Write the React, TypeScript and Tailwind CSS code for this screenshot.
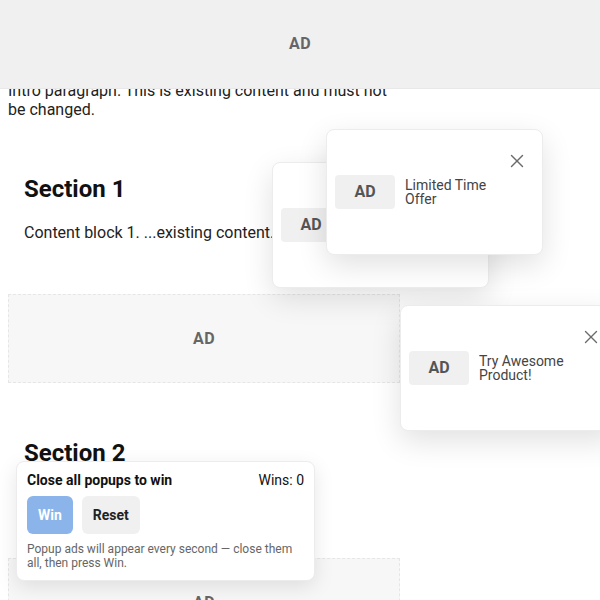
import { useState } from 'react';

type Popup = { id: number; left: number; top: number; text: string };

const initialPopups: Popup[] = [
  { id: 1, left: 272, top: 162, text: 'Special Deal Today' },
  { id: 2, left: 326, top: 129, text: 'Limited Time Offer' },
  { id: 3, left: 400, top: 305, text: 'Try Awesome Product!' },
];

function CloseIcon() {
  return (
    <svg width="14" height="14" viewBox="0 0 14 14" fill="none" stroke="#6b6b6b" strokeWidth="1.4" strokeLinecap="round">
      <line x1="1.5" y1="1.5" x2="12.5" y2="12.5" />
      <line x1="12.5" y1="1.5" x2="1.5" y2="12.5" />
    </svg>
  );
}

function AdBlock() {
  return (
    <div className="mt-9 flex h-[89px] items-center justify-center border border-dashed border-[#e6e6e6] bg-[#f7f7f7]">
      <span className="text-[16px] font-bold tracking-wide text-[#666]">AD</span>
    </div>
  );
}

function Section({ title, body }: { title: string; body: string }) {
  return (
    <section className="mt-10 px-4 pt-4 pb-4">
      <h2 className="text-[24px] leading-[28px] font-bold text-[#111]">{title}</h2>
      <p className="mt-5 text-[16px] leading-[19px] text-[#222]">{body}</p>
    </section>
  );
}

export default function App() {
  const [popups, setPopups] = useState(initialPopups);
  const [wins, setWins] = useState(0);

  return (
    <div className="relative h-[600px] w-[600px] overflow-hidden bg-white font-['Roboto',sans-serif]">
      <div className="ml-2 w-[392px] pt-[81px]">
        <p className="text-[16px] leading-[19px] text-[#222]">
          Intro paragraph. This is existing content and must not be changed.
        </p>
        <Section title="Section 1" body="Content block 1. ...existing content..." />
        <AdBlock />
        <Section title="Section 2" body="Content block 2. ...existing content..." />
        <AdBlock />
      </div>

      <div className="absolute top-0 left-0 flex h-[89px] w-full items-center justify-center border-b border-[#e8e8e8] bg-[#f0f0f0]">
        <span className="text-[16px] font-bold tracking-wide text-[#666]">AD</span>
      </div>

      {popups.map((p) => (
        <div
          key={p.id}
          className="absolute flex h-[126px] w-[217px] items-center rounded-lg border border-[#ececec] bg-white p-2 shadow-[0_10px_30px_rgba(0,0,0,0.12)]"
          style={{ left: p.left, top: p.top }}
        >
          <div className="flex h-[34px] w-[60px] shrink-0 items-center justify-center rounded bg-[#f0f0f0]">
            <span className="text-[16px] font-bold text-[#555]">AD</span>
          </div>
          <span className="ml-2.5 w-[100px] text-[14px] leading-[14px] text-[#444]">{p.text}</span>
          <button
            className="absolute top-[24px] left-[183px] flex h-[14px] w-[14px] items-center justify-center"
            onClick={() => setPopups((list) => list.filter((x) => x.id !== p.id))}
          >
            <CloseIcon />
          </button>
        </div>
      ))}

      <div className="absolute top-[461px] left-4 w-[299px] rounded-lg border border-[#ececec] bg-white px-2.5 pt-2.5 pb-2.5 shadow-[0_6px_20px_rgba(0,0,0,0.1)]">
        <div className="flex items-center justify-between text-[14px] leading-4 text-[#111]">
          <span className="font-bold">Close all popups to win</span>
          <span>Wins: {wins}</span>
        </div>
        <div className="mt-2 flex gap-[9px]">
          <button
            className="h-[38px] rounded-md bg-[#8ab4ea] px-[11px] text-[14px] font-bold text-white"
            onClick={() => popups.length === 0 && setWins(wins + 1)}
          >
            Win
          </button>
          <button
            className="h-[38px] rounded-md bg-[#f0f0f0] px-[11px] text-[14px] font-bold text-[#222]"
            onClick={() => setPopups(initialPopups)}
          >
            Reset
          </button>
        </div>
        <p className="mt-2 text-[12px] leading-[14px] text-[#666]">
          Popup ads will appear every second — close them all, then press Win.
        </p>
      </div>
    </div>
  );
}
